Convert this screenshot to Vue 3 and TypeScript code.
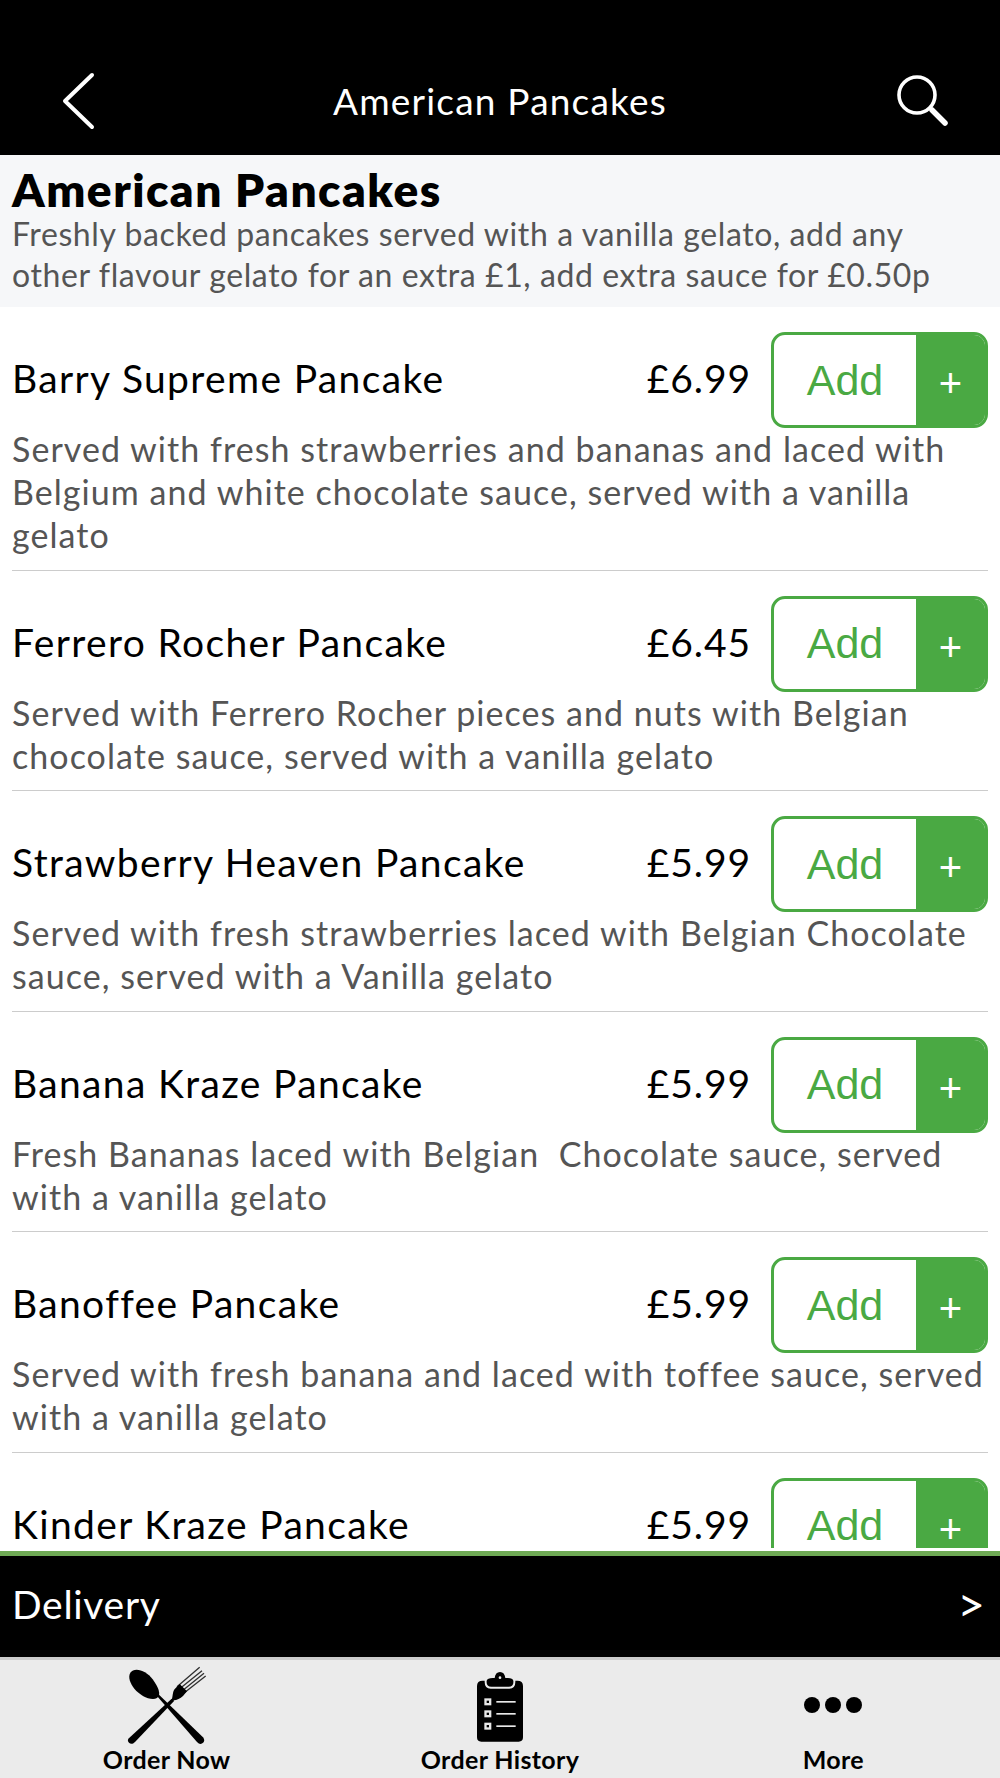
<script setup lang="ts">
interface Item { name: string; price: string; desc?: string }
const items: Item[] = [
  { name: 'Barry Supreme Pancake', price: '£6.99', desc: 'Served with fresh strawberries and bananas and laced with Belgium and white chocolate sauce, served with a vanilla gelato' },
  { name: 'Ferrero Rocher Pancake', price: '£6.45', desc: 'Served with Ferrero Rocher pieces and nuts with Belgian chocolate sauce, served with a vanilla gelato' },
  { name: 'Strawberry Heaven Pancake', price: '£5.99', desc: 'Served with fresh strawberries laced with Belgian Chocolate sauce, served with a Vanilla gelato' },
  { name: 'Banana Kraze Pancake', price: '£5.99', desc: 'Fresh Bananas laced with Belgian  Chocolate sauce, served with a vanilla gelato' },
  { name: 'Banoffee Pancake', price: '£5.99', desc: 'Served with fresh banana and laced with toffee sauce, served with a vanilla gelato' },
  { name: 'Kinder Kraze Pancake', price: '£5.99' }
]
</script>

<template>
  <div class="app">
    <header class="top">
      <svg class="back" width="100" height="100" viewBox="0 0 100 100" fill="none">
        <path d="M62 25 L35 51 L62 77" stroke="#fff" stroke-width="4" stroke-linecap="round" stroke-linejoin="round" />
      </svg>
      <div class="top-title">American Pancakes</div>
      <svg class="search" width="100" height="100" viewBox="0 0 100 100" fill="none">
        <circle cx="37" cy="45" r="18" stroke="#fff" stroke-width="3.6" />
        <path d="M52 60 L65 73" stroke="#fff" stroke-width="5.5" stroke-linecap="round" />
      </svg>
    </header>

    <section class="intro">
      <h1>American Pancakes</h1>
      <p>Freshly backed pancakes served with a vanilla gelato, add any other flavour gelato for an extra £1, add extra sauce for £0.50p</p>
    </section>

    <main class="list">
      <article v-for="item in items" :key="item.name" class="row">
        <div class="line">
          <div class="name">{{ item.name }}</div>
          <div class="price">{{ item.price }}</div>
          <div class="add">
            <span class="add-label">Add</span>
            <span class="add-plus">+</span>
          </div>
        </div>
        <p v-if="item.desc" class="desc">{{ item.desc }}</p>
      </article>
    </main>

    <div class="delivery">
      <span>Delivery</span>
      <span class="chev">&gt;</span>
    </div>

    <nav class="tabs">
      <div class="tab">
        <div class="ico-box">
          <svg width="84" height="84" viewBox="72 45 252 252">
            <path d="M88 68 C100 50 135 60 155 88 C172 112 182 134 168 144 C150 154 116 136 100 116 C88 100 80 82 88 68 Z" fill="#000" />
            <path d="M166 136 L174 134 L306 262 C312 270 310 276 304 280 C298 283 294 282 288 276 Z" fill="#000" />
            <path d="M82 266 L212 146 L220 152 L102 276 C94 284 88 282 84 278 C80 274 80 270 82 266 Z" fill="#000" />
            <path d="M212 150 C216 138 214 124 222 116 L236 102 L258 124 L246 138 C236 148 224 152 212 150 Z" fill="#000" />
            <path d="M228 110 L296 52 M236 116 L303 62 M244 122 L309 70 M250 128 L314 78" stroke="#000" stroke-width="4" fill="none" opacity=".8" />
          </svg>
        </div>
        <span>Order Now</span>
      </div>
      <div class="tab">
        <div class="ico-box">
          <svg class="clip" width="46" height="74" viewBox="105 60 138 222">
            <path d="M105 108 Q105 92 122 92 L128 92 L128 96 Q128 116 146 116 L202 116 Q220 116 220 96 L220 92 L226 92 Q243 92 243 108 L243 262 Q243 275 230 275 L118 275 Q105 275 105 262 Z" fill="#000" />
            <path d="M134 92 Q136 84 152 84 L158 84 Q160 66 174 66 Q188 66 190 84 L198 84 Q212 84 214 92 Q216 110 200 110 L148 110 Q132 110 134 92 Z" fill="#000" />
            <circle cx="174" cy="83" r="4" fill="#ebebeb" />
            <g fill="#e8e8e8">
              <rect x="127" y="145" width="21" height="21" />
              <rect x="127" y="181" width="21" height="21" />
              <rect x="127" y="218" width="21" height="21" />
              <rect x="163" y="153" width="58" height="5" />
              <rect x="163" y="189" width="58" height="5" />
              <rect x="163" y="226" width="58" height="5" />
            </g>
            <g fill="#000">
              <rect x="134" y="152" width="7" height="7" />
              <rect x="134" y="188" width="7" height="7" />
              <rect x="134" y="225" width="7" height="7" />
            </g>
          </svg>
        </div>
        <span>Order History</span>
      </div>
      <div class="tab">
        <div class="ico-box">
          <svg width="64" height="84" viewBox="0 0 64 84">
            <circle cx="11" cy="40" r="8" fill="#000" />
            <circle cx="32" cy="40" r="8" fill="#000" />
            <circle cx="53" cy="40" r="8" fill="#000" />
          </svg>
        </div>
        <span>More</span>
      </div>
    </nav>
  </div>
</template>

<style scoped>
.app {
  width: 1000px;
  height: 1778px;
  display: flex;
  flex-direction: column;
  overflow: hidden;
  background: #fff;
  font-family: Lato, "Liberation Sans", sans-serif;
  color: #000;
}
.top {
  height: 155px;
  flex: none;
  background: #000;
  display: grid;
  grid-template-columns: 1fr auto 1fr;
  align-items: start;
  padding: 50px 20px 0;
  box-sizing: border-box;
  color: #fff;
}
.back { justify-self: start; margin-left: 10px; }
.search { justify-self: end; }
.top-title {
  font-size: 37px;
  line-height: 44px;
  margin-top: 29px;
  letter-spacing: 1.2px;
}
.intro {
  flex: none;
  height: 152px;
  box-sizing: border-box;
  background: #f6f7f9;
  padding: 11px 12px 0;
}
.intro h1 {
  margin: 0;
  font-size: 46px;
  line-height: 47px;
  font-weight: 800;
  letter-spacing: 1.5px;
}
.intro p {
  margin: 0;
  font-size: 32px;
  line-height: 41px;
  letter-spacing: 0.6px;
  color: #555;
}
.list {
  flex: 1;
  min-height: 0;
  overflow: hidden;
  padding: 0 12px;
}
.row {
  padding: 25px 0 13.5px;
  border-bottom: 1px solid #ccc;
}
.line {
  display: flex;
  align-items: center;
}
.name {
  flex: 1;
  font-size: 39px;
  letter-spacing: 1.35px;
  padding-bottom: 4px;
}
.price {
  font-size: 39px;
  letter-spacing: 0.9px;
  margin-right: 20px;
  padding-bottom: 4px;
}
.add {
  width: 217px;
  height: 96px;
  flex: none;
  box-sizing: border-box;
  border: 3px solid #4aa943;
  border-radius: 14px;
  display: flex;
  overflow: hidden;
  font-family: "Liberation Sans", Arial, sans-serif;
}
.add-label {
  flex: 1;
  display: flex;
  align-items: center;
  justify-content: center;
  font-size: 43px;
  color: #4aa943;
}
.add-plus {
  width: 69px;
  box-sizing: border-box;
  padding-top: 7px;
  background: #4aa943;
  color: #fff;
  font-size: 40px;
  display: flex;
  align-items: center;
  justify-content: center;
}
.desc {
  margin: -1px 0 0;
  font-size: 34px;
  line-height: 43px;
  letter-spacing: 1.05px;
  color: #555;
  white-space: pre-wrap;
}
.delivery {
  flex: none;
  margin-top: 3px;
  height: 106px;
  box-sizing: border-box;
  border-top: 5px solid #6faa55;
  background: #000;
  color: #fff;
  display: flex;
  justify-content: space-between;
  align-items: center;
  padding: 0 15px 6px 12px;
  font-size: 39px;
  letter-spacing: 0.7px;
}
.chev { font-size: 48px; line-height: 50px; letter-spacing: 0; }
.tabs {
  flex: none;
  height: 121px;
  box-sizing: border-box;
  border-top: 3px solid #ccc;
  background: #ebebeb;
  display: grid;
  grid-template-columns: repeat(3, 1fr);
}
.tab {
  display: flex;
  flex-direction: column;
  align-items: center;
  font-size: 25px;
  font-weight: 700;
  line-height: 28px;
  padding-top: 5px;
  letter-spacing: 0.35px;
}
.ico-box {
  height: 80px;
  display: flex;
  justify-content: center;
  align-items: flex-start;
}
.ico-box svg { display: block; flex: none; }
.ico-box .clip { margin-top: 5px; }
</style>
